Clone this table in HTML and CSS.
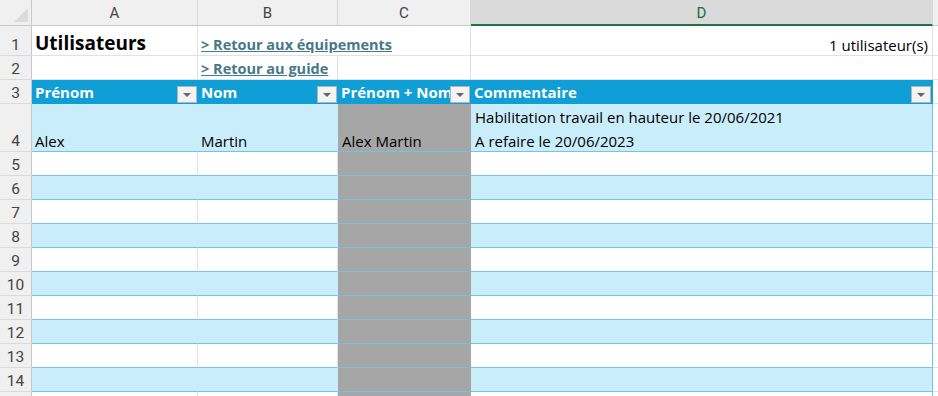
FILE: index.html
```html
<!DOCTYPE html>
<html lang="fr">
<head>
<meta charset="utf-8">
<title>Utilisateurs</title>
<link rel="stylesheet" href="styles.css">
</head>
<body>
<div class="sheet">
  <div class="corner"><span class="tri"></span></div>
  <div class="ch">A</div><div class="ch">B</div><div class="ch">C</div><div class="ch sel">D</div><div class="ch"></div>

  <div class="rh">1</div>
  <div class="c title">Utilisateurs</div>
  <div class="c link span2"><a href="#">&gt; Retour aux équipements</a></div>
  <div class="c right">1 utilisateur(s)</div>
  <div class="c"></div>

  <div class="rh">2</div>
  <div class="c"></div>
  <div class="c link"><a href="#">&gt; Retour au guide</a></div>
  <div class="c"></div>
  <div class="c"></div>
  <div class="c"></div>

  <div class="rh">3</div>
  <div class="th">Prénom<span class="fb"></span></div>
  <div class="th">Nom<span class="fb"></span></div>
  <div class="th">Prénom + Nom<span class="fb"></span></div>
  <div class="th last">Commentaire<span class="fb"></span></div>
  <div class="c"></div>

  <div class="rh">4</div>
  <div class="t l">Alex</div>
  <div class="t l">Martin</div>
  <div class="t g">Alex Martin</div>
  <div class="t l d"><span class="multi">Habilitation travail en hauteur le 20/06/2021<br>A refaire le 20/06/2023</span></div>
  <div class="c"></div>

  <div class="rh">5</div><div class="t w"></div><div class="t w"></div><div class="t g"></div><div class="t w d"></div><div class="c"></div>
  <div class="rh">6</div><div class="t l"></div><div class="t l"></div><div class="t g"></div><div class="t l d"></div><div class="c"></div>
  <div class="rh">7</div><div class="t w"></div><div class="t w"></div><div class="t g"></div><div class="t w d"></div><div class="c"></div>
  <div class="rh">8</div><div class="t l"></div><div class="t l"></div><div class="t g"></div><div class="t l d"></div><div class="c"></div>
  <div class="rh">9</div><div class="t w"></div><div class="t w"></div><div class="t g"></div><div class="t w d"></div><div class="c"></div>
  <div class="rh">10</div><div class="t l"></div><div class="t l"></div><div class="t g"></div><div class="t l d"></div><div class="c"></div>
  <div class="rh">11</div><div class="t w"></div><div class="t w"></div><div class="t g"></div><div class="t w d"></div><div class="c"></div>
  <div class="rh">12</div><div class="t l"></div><div class="t l"></div><div class="t g"></div><div class="t l d"></div><div class="c"></div>
  <div class="rh">13</div><div class="t w"></div><div class="t w"></div><div class="t g"></div><div class="t w d"></div><div class="c"></div>
  <div class="rh">14</div><div class="t l"></div><div class="t l"></div><div class="t g"></div><div class="t l d"></div><div class="c"></div>
  <div class="rh"></div><div class="t w"></div><div class="t w"></div><div class="t g"></div><div class="t w d"></div><div class="c"></div>
</div>
</body>
</html>
```

FILE: styles.css
```css
* { box-sizing: border-box; }
html, body { margin: 0; padding: 0; background: #fff; overflow: hidden; }
body {
  width: 938px;
  height: 396px;
  font-family: "Open Sans", "Noto Sans", sans-serif;
  font-size: 15px;
  color: #000;
}
.sheet {
  display: grid;
  grid-template-columns: 32px 166px 140px 133px 462px 1fr;
  grid-template-rows: 26px 30px 24px 24px 48px repeat(11, 24px);
  height: 396px;
  overflow: hidden;
}
.corner {
  background: #f0f0f0;
  border-right: 1px solid #c8c8c8;
  border-bottom: 1px solid #c8c8c8;
  position: relative;
}
.tri {
  position: absolute;
  right: 3px;
  bottom: 3px;
  width: 0;
  height: 0;
  border-left: 14px solid transparent;
  border-bottom: 14px solid #dcdcdc;
}
.ch {
  background: #f0f0f0;
  border-right: 1px solid #d8d8d8;
  border-bottom: 1px solid #c8c8c8;
  display: flex;
  align-items: center;
  justify-content: center;
  color: #444;
  font-family: Roboto, sans-serif;
  font-size: 15px;
  padding-top: 1px;
}
.ch.sel {
  background: #dadada;
  color: #1d6b3f;
  border-bottom: 2px solid #217346;
}
.rh {
  background: #f0f0f0;
  border-right: 1px solid #c8c8c8;
  border-bottom: 1px solid #dadada;
  display: flex;
  align-items: flex-end;
  justify-content: center;
  color: #444;
  font-family: Roboto, sans-serif;
  font-size: 15.5px;
  line-height: 20px;
}
.c, .t, .th {
  display: flex;
  align-items: flex-end;
  padding: 0 3px;
  line-height: 20px;
  white-space: nowrap;
  overflow: hidden;
}
.c {
  border-right: 1px solid #e1e1e1;
  border-bottom: 1px solid #e1e1e1;
}
.span2 { grid-column: span 2; }
.right { justify-content: flex-end; padding-right: 4px; }
.title { font-weight: bold; font-size: 19px; line-height: 23px; }
.link a {
  color: #467886;
  font-weight: bold;
  font-size: 14.5px;
  text-decoration: underline;
}
.th {
  position: relative;
  background: #0f9ed5;
  color: #fff;
  font-weight: bold;
  border-bottom: 1px solid #0f9ed5;
  padding-bottom: 1px;
}
.th.last { border-right: 1px solid #0f9ed5; }
.fb {
  position: absolute;
  right: 1px;
  bottom: 0;
  width: 20px;
  height: 17px;
  background: #f3f3f3;
  border: 1px solid #b4b4b4;
}
.fb::after {
  content: "";
  position: absolute;
  left: 5px;
  top: 6px;
  border-left: 4px solid transparent;
  border-right: 4px solid transparent;
  border-top: 4px solid #666;
}
.t {
  border-bottom: 1px solid #6fc5e6;
}
.t.l { background: #caedfb; border-right: 1px solid #caedfb; }
.t.w { background: #fff; border-right: 1px solid #e1e1e1; }
.t.g { background: #a6a6a6; border-right: 1px solid #a6a6a6; padding-left: 4px; }
.t.d { border-right: 1px solid #6fc5e6; padding-left: 4px; }
.multi { line-height: 24px; margin-bottom: -2px; }
```
